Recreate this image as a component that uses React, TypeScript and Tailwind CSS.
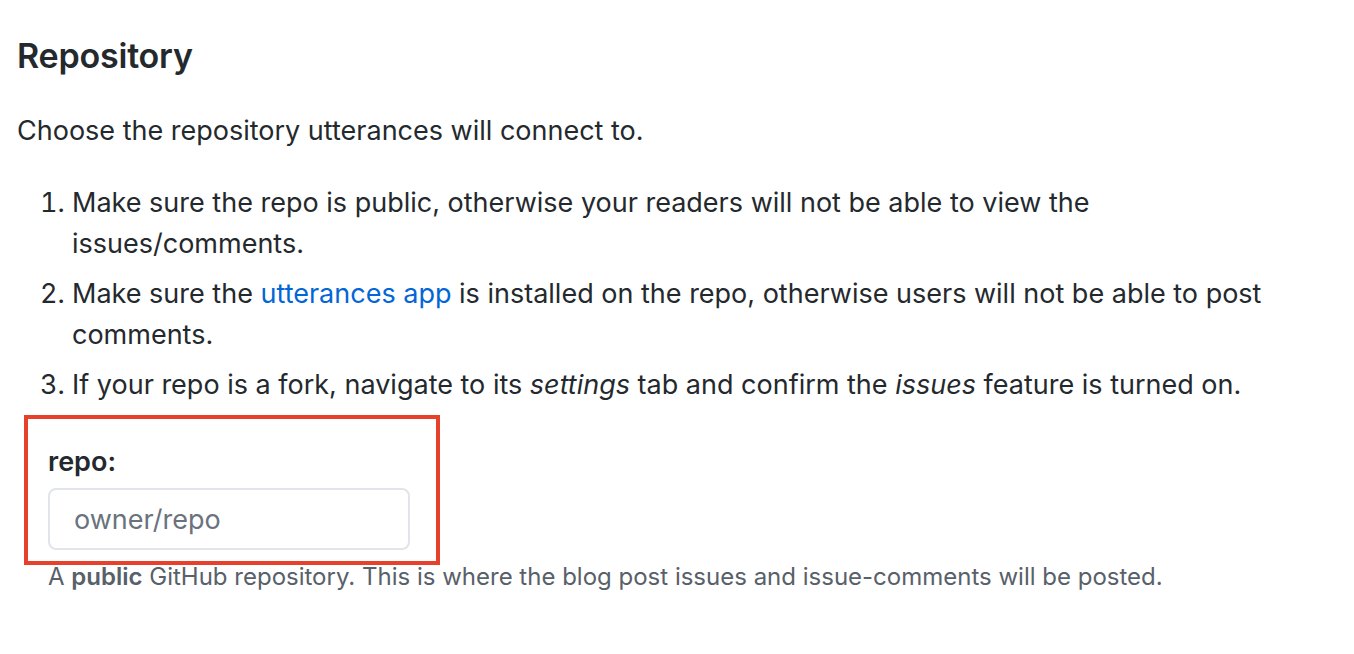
export default function App() {
  return (
    <div className="min-h-screen bg-white text-[#24292e] font-['Inter','Liberation_Sans',sans-serif]">
      <div className="w-[1300px] pl-[17px] pt-[34px]">
        <h2 className="text-[34px] font-semibold leading-[44px] tracking-[-0.2px]">Repository</h2>
        <p className="mt-[32px] text-[27px] leading-[41px]">Choose the repository utterances will connect to.</p>
        <ol className="mt-[31px] list-decimal pl-[55px] text-[27px] leading-[41px]">
          <li>Make sure the repo is public, otherwise your readers will not be able to view the issues/comments.</li>
          <li className="mt-[9px]">
            Make sure the <a className="text-[#0366d6]" href="#">utterances app</a> is installed on the repo, otherwise users will not be able to post comments.
          </li>
          <li className="mt-[9px]">
            If your repo is a fork, navigate to its <em>settings</em> tab and confirm the <em>issues</em> feature is turned on.
          </li>
        </ol>
        <div className="relative mt-[10px] w-fit pl-[31px] pt-[31px]">
          <div className="pointer-events-none absolute left-[7px] top-0 h-[150px] w-[416px] border-[4px] border-[#e8412b]" />
          <label className="block text-[27px] font-semibold leading-[32px]">repo:</label>
          <input
            readOnly
            placeholder="owner/repo"
            className="mt-[10px] h-[62px] w-[362px] rounded-[8px] border-2 border-[#e1e4e8] bg-white px-[24px] text-[27px] placeholder:text-[#6a737d]"
          />
          <p className="mt-[12px] text-[24px] leading-[30px] text-[#586069]">
            A <strong className="font-semibold">public</strong> GitHub repository. This is where the blog post issues and issue-comments will be posted.
          </p>
        </div>
      </div>
    </div>
  );
}
